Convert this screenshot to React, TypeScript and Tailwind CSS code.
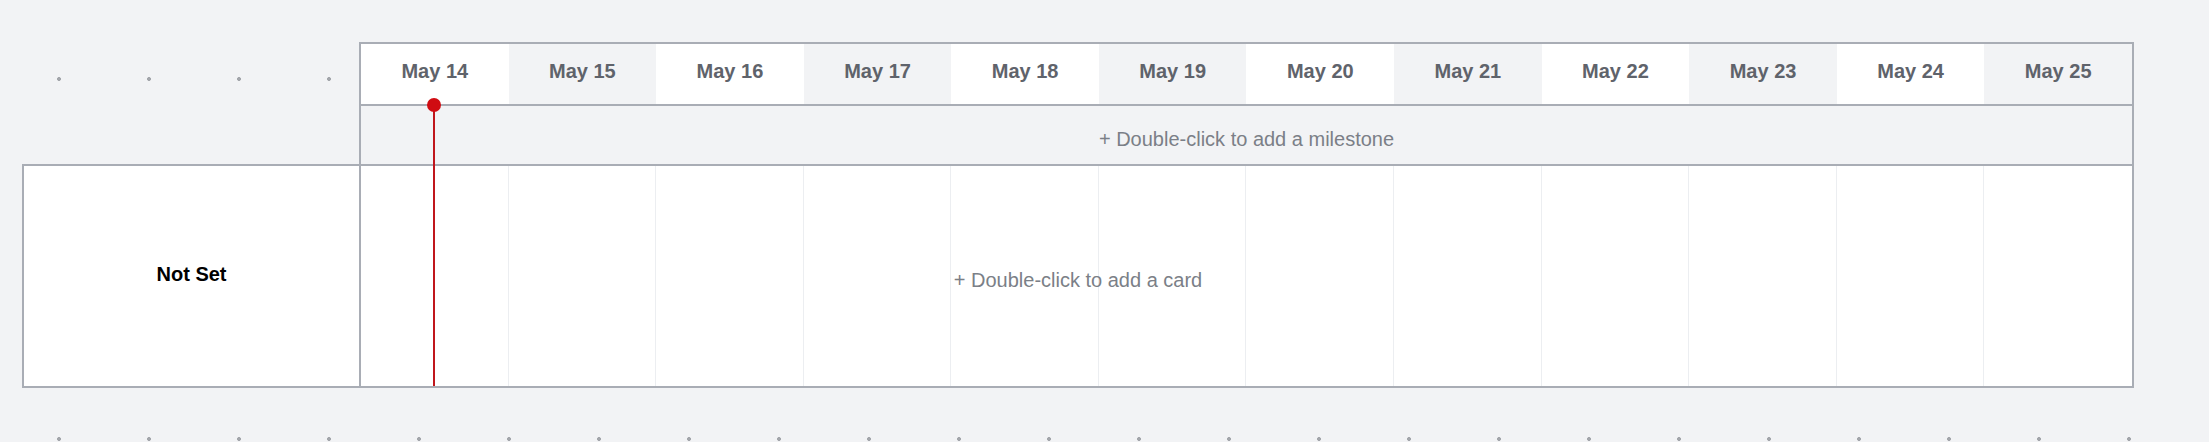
import React from 'react';

const days = ['May 14', 'May 15', 'May 16', 'May 17', 'May 18', 'May 19', 'May 20', 'May 21', 'May 22', 'May 23', 'May 24', 'May 25'];

const TimelineHeader: React.FC = () => (
    <div className="ml-[359px] w-[1775px] border-2 border-b-0 border-[#a9adb5]">
        <div className="grid grid-cols-12 h-[62px] border-b-2 border-[#a9adb5]">
            {days.map((day, i) => (
                <div
                    key={day}
                    className={`flex items-center justify-center pb-[6px] text-[20px] font-bold text-[#5f636b] ${i % 2 === 0 ? 'bg-white' : 'bg-[#f2f3f5]'}`}
                >
                    {day}
                </div>
            ))}
        </div>
        <div className="h-[58px] bg-[#f2f3f5] flex items-center justify-center pt-[7px] text-[20px] text-[#7b7f87]">
            + Double-click to add a milestone
        </div>
    </div>
);

const Swimlane: React.FC = () => (
    <div className="relative ml-[22px] w-[2112px] h-[224px] border-2 border-[#a9adb5] bg-white flex">
        <div className="w-[337px] border-r-2 border-[#a9adb5] flex items-center justify-center pb-[4px] text-[20px] font-bold text-black">
            Not Set
        </div>
        <div className="flex-1 grid grid-cols-12">
            {days.map((day) => (
                <div key={day} className="border-r border-[#eceef1] last:border-r-0" />
            ))}
        </div>
        <div className="absolute inset-0 flex items-center justify-center pt-[8px] text-[20px] text-[#7b7f87] pointer-events-none">
            + Double-click to add a card
        </div>
    </div>
);

export default function App() {
    return (
        <div className="relative w-[2209px] h-[442px] overflow-hidden pt-[42px] bg-[#f2f3f5] bg-[radial-gradient(circle,#a3a6ab_1.8px,transparent_2.2px)] bg-[length:90px_90px] bg-[position:14px_34px] font-['Liberation_Sans',Arial,sans-serif]">
            <TimelineHeader />
            <Swimlane />
            {/* today marker */}
            <div className="absolute left-[433px] top-[105px] w-[2px] h-[281px] bg-[#c0161c]" />
            <div className="absolute left-[427px] top-[98px] w-[14px] h-[14px] rounded-full bg-[#d00c12]" />
        </div>
    );
}
